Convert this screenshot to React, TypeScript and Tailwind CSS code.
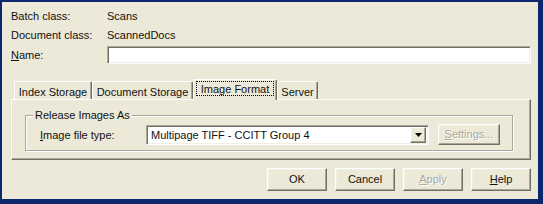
import React from "react"

const raised =
  "border border-t-white border-l-white border-r-[#716f64] border-b-[#716f64] shadow-[inset_-1px_-1px_0_#aca899,inset_1px_1px_0_#f1efe2]"
const sunken =
  "border border-t-[#aca899] border-l-[#aca899] border-r-white border-b-white shadow-[inset_1px_1px_0_#716f64,inset_-1px_-1px_0_#f1efe2]"
const disabled = "text-[#aca899] [text-shadow:1px_1px_0_#fff]"

function Tab({ label, width, selected }: { label: string; width: string; selected?: boolean }) {
  if (selected) {
    return (
      <div
        className={`${width} h-[21px] -mb-px relative z-10 bg-[#ece9d8] border-t border-l border-r border-t-white border-l-white border-r-[#716f64] rounded-t-[2px] shadow-[inset_-1px_0_0_#aca899] flex px-[2px] pt-[1px] pb-[4px]`}
      >
        <div className="flex-1 border border-dotted border-black flex items-center justify-center leading-[14px]">
          {label}
        </div>
      </div>
    )
  }
  return (
    <div
      className={`${width} h-[18px] border-t border-l border-r border-t-white border-l-white border-r-[#716f64] rounded-t-[2px] shadow-[inset_-1px_0_0_#aca899] flex items-center justify-center pt-[2px] leading-[14px]`}
    >
      {label}
    </div>
  )
}

function Btn({ children, off }: { children: React.ReactNode; off?: boolean }) {
  return (
    <div className={`w-[60px] h-[23px] flex items-center justify-center ${raised} ${off ? disabled : ""}`}>
      {children}
    </div>
  )
}

export default function App() {
  return (
    <div className="w-[543px] h-[204px] bg-[#0b2770] pl-[2px] pt-[2px] pr-[5px] pb-[5px]">
      <div className="h-full bg-[#ece9d8] flex flex-col text-[11px] text-[#111] font-['Liberation_Sans',Arial,sans-serif]">
        {/* info rows */}
        <div className="mt-[7px] flex pl-[9px] leading-[14px]">
          <div className="w-[96px]">Batch class:</div>
          <div>Scans</div>
        </div>
        <div className="mt-[5px] flex pl-[9px] leading-[14px]">
          <div className="w-[96px]">Document class:</div>
          <div>ScannedDocs</div>
        </div>
        <div className="mt-[4px] flex items-center pl-[9px] pr-[7px]">
          <div className="w-[96px] leading-[14px]">
            <u className="underline-offset-[1px]">N</u>ame:
          </div>
          <div className={`flex-1 h-[18px] bg-white ${sunken}`} />
        </div>

        {/* tabs */}
        <div className="mt-[15px] h-[20px] flex items-end pl-[12px]">
          <Tab label="Index Storage" width="w-[78px]" />
          <Tab label="Document Storage" width="w-[101px]" />
          <Tab label="Image Format" width="w-[84px]" selected />
          <Tab label="Server" width="w-[41px]" />
        </div>

        {/* panel */}
        <div className="ml-[9px] w-[520px] h-[61px] border border-t-white border-l-white border-r-[#716f64] border-b-[#716f64] shadow-[inset_-1px_-1px_0_#aca899] flex flex-col">
          <fieldset className="mt-[8px] ml-[13px] mr-[17px] border border-[#aca899] shadow-[inset_1px_1px_0_#fff,1px_1px_0_#fff] pl-[7px] pr-[10px] pt-[2px] pb-[5px]">
            <legend className="px-[2px] leading-[14px] bg-[#ece9d8]">Release Images As</legend>
            <div className="flex items-center pl-[7px]">
              <div className="w-[106px] leading-[14px]">
                <u className="underline-offset-[1px]">I</u>mage file type:
              </div>
              <div className={`w-[283px] h-[20px] bg-white flex items-center pl-[4px] pr-[2px] ${sunken}`}>
                <div className="flex-1 leading-[14px]">Multipage TIFF - CCITT Group 4</div>
                <div className={`w-[16px] h-[16px] bg-[#ece9d8] flex items-center justify-center ${raised}`}>
                  <svg width="7" height="4" viewBox="0 0 7 4">
                    <polygon points="0,0 7,0 3.5,4" fill="#000" />
                  </svg>
                </div>
              </div>
              <div className={`ml-[9px] w-[62px] h-[21px] flex items-center justify-center ${raised} ${disabled}`}>
                <u className="underline-offset-[1px]">S</u>ettings...
              </div>
            </div>
          </fieldset>
        </div>

        {/* buttons */}
        <div className="mt-[8px] flex justify-end gap-[8px] pr-[7px]">
          <Btn>OK</Btn>
          <Btn>Cancel</Btn>
          <Btn off>
            <u className="underline-offset-[1px]">A</u>pply
          </Btn>
          <Btn>
            <u className="underline-offset-[1px]">H</u>elp
          </Btn>
        </div>
      </div>
    </div>
  )
}
